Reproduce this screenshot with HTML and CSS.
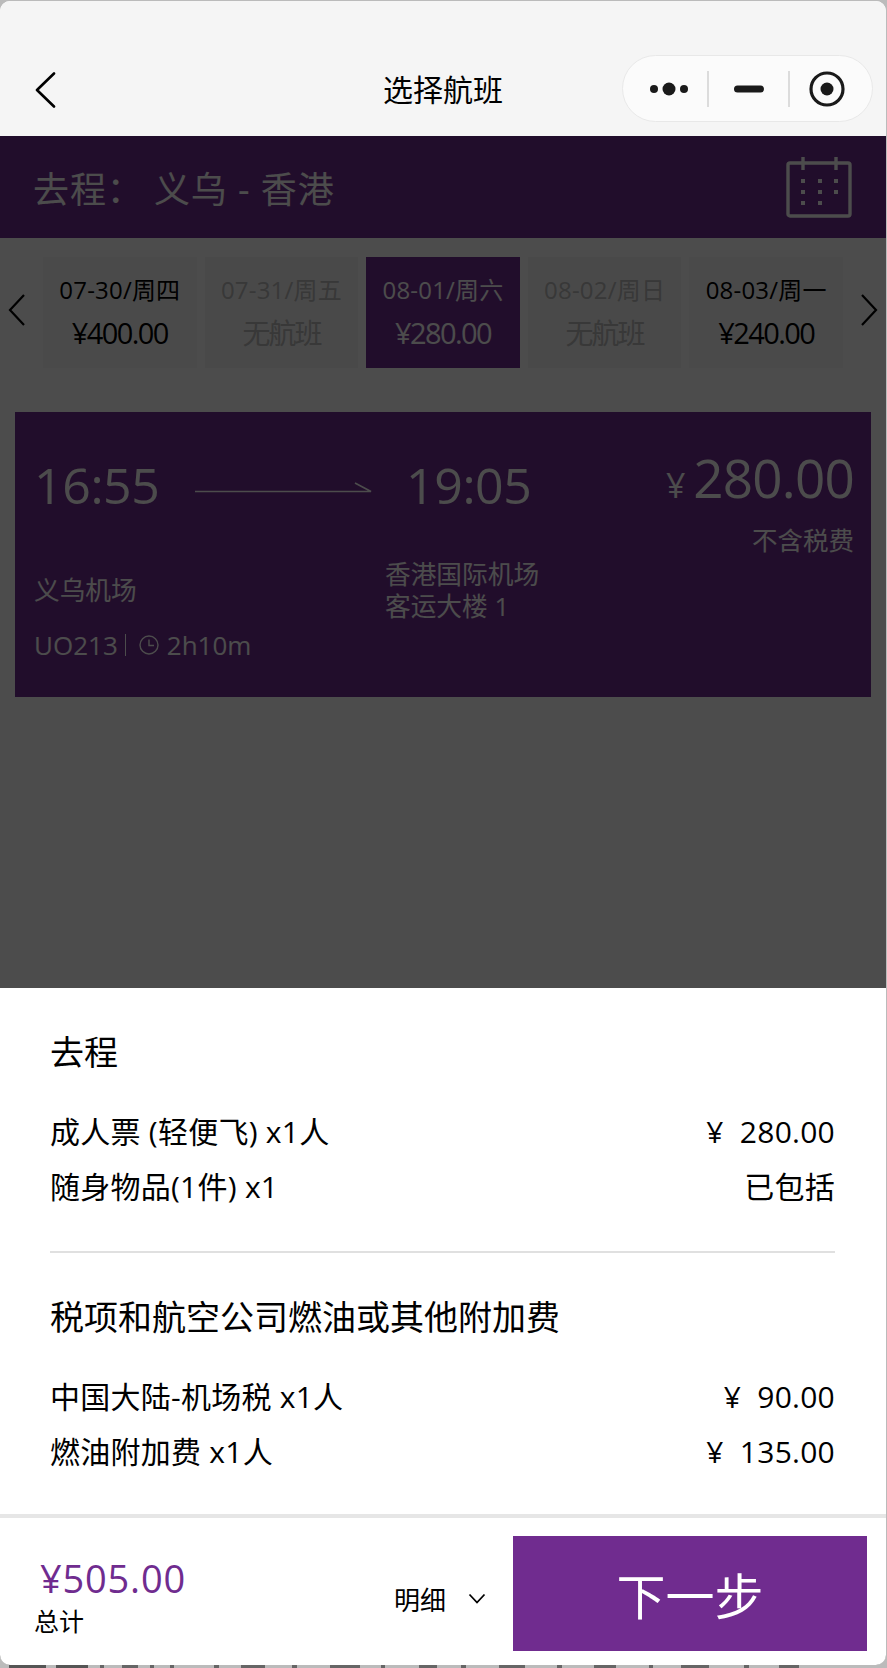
FILE: index.html
```html
<!DOCTYPE html>
<html lang="zh-CN">
<head>
<meta charset="utf-8">
<title>选择航班</title>
<link rel="stylesheet" href="styles.css">
</head>
<body>
<div class="window">
  <header class="nav">
    <div class="nav-left">
      <svg class="back" width="22" height="36" viewBox="0 0 22 36"><path d="M20 1.5 3 18l17 16.5" fill="none" stroke="#000" stroke-width="2.6" stroke-linecap="round" stroke-linejoin="round"/></svg>
    </div>
    <h1 class="nav-title">选择航班</h1>
    <div class="capsule">
      <div class="cap-part cap-more">
        <svg width="40" height="16" viewBox="0 0 40 16"><circle cx="5" cy="8" r="4" fill="#1a1a1a"/><circle cx="20" cy="8" r="6.5" fill="#1a1a1a"/><circle cx="35" cy="8" r="4" fill="#1a1a1a"/></svg>
      </div>
      <div class="cap-part cap-min">
        <svg width="30" height="8" viewBox="0 0 30 8"><rect x="0" y="0.5" width="30" height="7" rx="3.5" fill="#1a1a1a"/></svg>
      </div>
      <div class="cap-part cap-close">
        <svg width="36" height="36" viewBox="0 0 36 36"><circle cx="18" cy="18" r="16" fill="none" stroke="#1a1a1a" stroke-width="3.2"/><circle cx="18" cy="18" r="6.5" fill="#1a1a1a"/></svg>
      </div>
    </div>
  </header>

  <main class="page">
    <section class="route">
      <div class="route-text">去程：&nbsp;义乌 - 香港</div>
      <svg class="cal" width="66" height="61" viewBox="0 0 66 61" fill="none" stroke="#fff" stroke-width="3.4">
        <rect x="2" y="6" width="62" height="53" rx="2"/>
        <path d="M17 0v13M50 0v13"/>
        <g fill="#fff" stroke="none">
          <rect x="15" y="22" width="4" height="4"/><rect x="32" y="22" width="4" height="4"/><rect x="48" y="22" width="4" height="4"/>
          <rect x="15" y="33" width="4" height="4"/><rect x="32" y="33" width="4" height="4"/><rect x="48" y="33" width="4" height="4"/>
          <rect x="15" y="44" width="4" height="4"/><rect x="32" y="44" width="4" height="4"/>
        </g>
      </svg>
    </section>

    <section class="dates">
      <svg class="date-arrow" width="18" height="32" viewBox="0 0 18 32"><path d="M16 1 2 16l14 15" fill="none" stroke="#000" stroke-width="2.2"/></svg>
      <div class="date-list">
        <div class="date-tab"><div class="date-day">07-30/周四</div><div class="date-price">¥400.00</div></div>
        <div class="date-tab is-off"><div class="date-day">07-31/周五</div><div class="date-price">无航班</div></div>
        <div class="date-tab is-on"><div class="date-day">08-01/周六</div><div class="date-price">¥280.00</div></div>
        <div class="date-tab is-off"><div class="date-day">08-02/周日</div><div class="date-price">无航班</div></div>
        <div class="date-tab"><div class="date-day">08-03/周一</div><div class="date-price">¥240.00</div></div>
      </div>
      <svg class="date-arrow" width="18" height="32" viewBox="0 0 18 32"><path d="M2 1l14 15L2 31" fill="none" stroke="#000" stroke-width="2.2"/></svg>
    </section>

    <article class="flight">
      <div class="flight-times">
        <div class="time">16:55</div>
        <svg class="flight-arrow" width="178" height="12" viewBox="0 0 178 12"><path d="M0 10.5h176L160 2" fill="none" stroke="#fff" stroke-width="1.6"/></svg>
        <div class="time">19:05</div>
        <div class="fare"><span class="fare-cur">¥</span><span class="fare-num">280.00</span></div>
      </div>
      <div class="flight-tax">不含税费</div>
      <div class="flight-ports">
        <div class="port-from">义乌机场</div>
        <div class="port-to">香港国际机场<br>客运大楼 1</div>
      </div>
      <div class="flight-meta">
        <span class="meta-no">UO213</span>
        <span class="meta-sep"></span>
        <svg class="meta-clock" width="20" height="20" viewBox="0 0 20 20" fill="none" stroke="#fff" stroke-width="1.4"><circle cx="10" cy="10" r="9"/><path d="M10 4.5V10.5H15"/></svg>
        <span class="meta-dur">2h10m</span>
      </div>
    </article>
  </main>

  <div class="scrim"></div>

  <aside class="sheet">
    <div class="sheet-body">
      <h2 class="sheet-title">去程</h2>
      <div class="fee-row"><span>成人票 (轻便飞) x1人</span><span>¥&nbsp;&nbsp;280.00</span></div>
      <div class="fee-row"><span>随身物品(1件) x1</span><span>已包括</span></div>
      <hr class="sheet-rule">
      <h2 class="sheet-title">税项和航空公司燃油或其他附加费</h2>
      <div class="fee-row"><span>中国大陆-机场税 x1人</span><span>¥&nbsp;&nbsp;90.00</span></div>
      <div class="fee-row"><span>燃油附加费 x1人</span><span>¥&nbsp;&nbsp;135.00</span></div>
    </div>
    <footer class="bar">
      <div class="total">
        <div class="total-price">¥505.00</div>
        <div class="total-label">总计</div>
      </div>
      <div class="detail">
        <span>明细</span>
        <svg width="18" height="11" viewBox="0 0 18 11"><path d="M1.5 1.5 9 9.5l7.5-8" fill="none" stroke="#000" stroke-width="1.8"/></svg>
      </div>
      <button class="next" type="button">下一步</button>
    </footer>
  </aside>
</div>
<div class="under"></div>
</body>
</html>
```
FILE: styles.css
```css
* { box-sizing: border-box; }
html, body { margin: 0; padding: 0; }
body {
  width: 887px;
  height: 1668px;
  overflow: hidden;
  background: #bbb;
  padding-top: 1px;
  font-family: "Open Sans", "Noto Sans CJK SC", sans-serif;
  color: #000;
}
.window {
  position: relative;
  width: 886px;
  height: 1664px;
  overflow: hidden;
  border-radius: 10px;
  background: #fff;
}
.under {
  height: 3px;
  margin: 0 36px 0 9px;
  background:
    linear-gradient(#555, #555) 0 0 / 37px 3px no-repeat,
    linear-gradient(#555, #555) 47px 0 / 32px 3px no-repeat,
    linear-gradient(#666, #666) 91px 0 / 4px 3px no-repeat,
    linear-gradient(#666, #666) 113px 0 / 16px 3px no-repeat,
    linear-gradient(#666, #666) 141px 0 / 4px 3px no-repeat,
    linear-gradient(#666, #666) 161px 0 / 4px 3px no-repeat,
    linear-gradient(#666, #666) 205px 0 / 5px 3px no-repeat,
    linear-gradient(#666, #666) 232px 0 / 24px 3px no-repeat,
    linear-gradient(#666, #666) 283px 0 / 5px 3px no-repeat,
    linear-gradient(#666, #666) 321px 0 / 30px 3px no-repeat,
    linear-gradient(#666, #666) 372px 0 / 4px 3px no-repeat,
    linear-gradient(#666, #666) 410px 0 / 18px 3px no-repeat,
    linear-gradient(#666, #666) 452px 0 / 5px 3px no-repeat,
    linear-gradient(#666, #666) 490px 0 / 26px 3px no-repeat,
    linear-gradient(#666, #666) 548px 0 / 5px 3px no-repeat,
    linear-gradient(#666, #666) 585px 0 / 22px 3px no-repeat,
    linear-gradient(#666, #666) 640px 0 / 4px 3px no-repeat,
    linear-gradient(#666, #666) 672px 0 / 28px 3px no-repeat,
    linear-gradient(#666, #666) 735px 0 / 5px 3px no-repeat,
    linear-gradient(#666, #666) 770px 0 / 20px 3px no-repeat;
}

/* nav */
.nav {
  height: 135px;
  display: grid;
  grid-template-columns: 1fr auto 1fr;
  align-items: end;
  padding: 0 13px 14px;
  background: #f5f5f5;
}
.nav-left { padding: 0 0 14px 21px; display: flex; }
.nav-title {
  margin: 0;
  height: 67px;
  font-size: 30px;
  font-weight: 400;
  line-height: 69px;
}
.capsule {
  justify-self: end;
  width: 251px;
  height: 67px;
  display: flex;
  border: 1px solid #e8e8e8;
  border-radius: 34px;
  background: #fbfbfb;
}
.cap-part { display: flex; align-items: center; justify-content: center; }
.cap-more { width: 85px; padding-left: 7px; }
.cap-min { width: 81px; position: relative; }
.cap-close { flex: 1; padding-right: 8px; }
.cap-min::before, .cap-min::after {
  content: "";
  position: absolute;
  top: 15px;
  width: 2px;
  height: 36px;
  background: #dcdcdc;
}
.cap-min::before { left: -1px; }
.cap-min::after { right: -1px; }

/* page under the scrim */
.page { background: #fff; height: 1529px; }
.route {
  height: 102px;
  display: flex;
  align-items: center;
  justify-content: space-between;
  padding: 0 34px 0 33px;
  background: #702c8f;
  color: #fff;
}
.route-text { font-size: 36px; letter-spacing: .9px; }
.cal { display: block; margin-top: 1px; }

.dates {
  height: 111px;
  margin-top: 19px;
  display: flex;
  align-items: center;
  justify-content: space-between;
  padding: 0 8px;
}
.date-arrow { margin-top: -5px; }
.date-list { width: 800px; display: flex; gap: 8px; }
.date-tab {
  flex: 1;
  height: 111px;
  background: #f9f9f9;
  text-align: center;
}
.date-day { padding-top: 14px; height: 54px; line-height: 37px; font-size: 24px; letter-spacing: .2px; }
.date-price { line-height: 44px; font-size: 29px; letter-spacing: -1.6px; }
.date-tab.is-off { background: #f5f5f5; color: #bbb; }
.date-tab.is-off .date-price { font-size: 28px; letter-spacing: -2px; }
.date-tab.is-on { background: #702c8f; color: #fff; }

.flight {
  height: 285px;
  margin: 44px 15px 0;
  padding: 0 17px 0 19px;
  background: #702c8f;
  color: #fff;
}
.flight-times { height: 74px; display: flex; position: relative; top: 36px; }
.time { width: 124px; font-size: 50px; line-height: 74px; letter-spacing: -.4px; white-space: nowrap; }
.flight-arrow { margin: 33px 33px 0 37px; }
.fare { margin-left: auto; display: flex; align-items: baseline; height: 60px; line-height: 60px; }
.fare-cur { font-size: 34px; margin-right: 8px; }
.fare-num { font-size: 53px; letter-spacing: -.8px; }
.flight-tax { margin-top: 36px; height: 36px; line-height: 36px; text-align: right; font-size: 25.5px; }
.flight-ports { height: 65px; display: flex; align-items: center; font-size: 25.7px; line-height: 32px; }
.port-from { width: 351px; }
.flight-meta { margin-top: 7px; height: 30px; display: flex; align-items: center; font-size: 26px; }
.meta-sep { width: 1px; height: 22px; margin: 0 13px 0 7px; background: #fff; }
.meta-clock { margin-right: 8px; }

.scrim {
  position: absolute;
  left: 0; right: 0; top: 135px; bottom: 0;
  background: rgba(0, 0, 0, .7);
}

/* bottom sheet */
.sheet {
  position: absolute;
  left: 0; right: 0; bottom: 0;
  height: 677px;
  display: flex;
  flex-direction: column;
  background: #fff;
}
.sheet-body { flex: 1; padding: 40px 51px 0 50px; }
.sheet-title { margin: 0 0 29px; font-size: 34px; line-height: 48px; font-weight: 400; }
.fee-row {
  display: flex;
  justify-content: space-between;
  height: 55px;
  line-height: 53px;
  font-size: 30px;
  letter-spacing: .25px;
}
.sheet-rule { height: 2px; margin: 36px 0 40px; border: 0; background: #e0e0e0; }
.bar {
  height: 151px;
  display: flex;
  align-items: center;
  padding: 18px 19px 14px 0;
  border-top: 4px solid #e6e6e6;
}
.total { flex: 1; padding-left: 34px; margin-top: 2px; }
.total-price { padding-left: 6px; font-size: 38px; line-height: 52px; color: #702c8f; letter-spacing: .8px; }
.total-label { font-size: 25px; line-height: 34px; }
.detail { display: flex; align-items: center; gap: 22px; margin: 10px 27px 0 0; font-size: 26px; }
.next {
  width: 354px;
  height: 115px;
  padding: 0;
  border: 0;
  background: #702c8f;
  color: #fff;
  font: inherit;
  font-size: 49px;
}
```
